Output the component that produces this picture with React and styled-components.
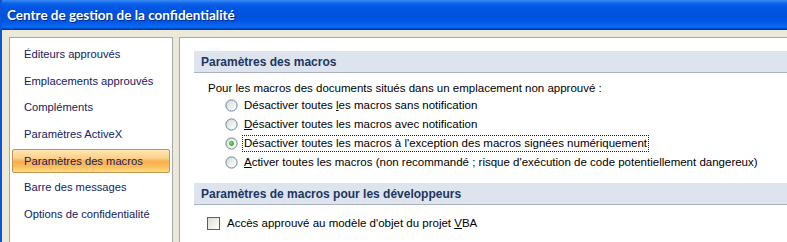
import React from 'react';
import styled, { createGlobalStyle } from 'styled-components';

const Global = createGlobalStyle`
  html, body { margin: 0; padding: 0; background: #ece9d8; }
  body { font-family: "Liberation Sans", Arial, sans-serif; }
`;

const navItems = [
    'Éditeurs approuvés',
    'Emplacements approuvés',
    'Compléments',
    'Paramètres ActiveX',
    'Paramètres des macros',
    'Barre des messages',
    'Options de confidentialité',
];

const Window = styled.div`
    width: 787px;
    height: 242px;
    overflow: hidden;
    border-left: 2px solid #0b53d9;
    box-sizing: border-box;
    display: flex;
    flex-direction: column;
    background: #ece9d8;
`;

const TitleBar = styled.div`
    height: 30px;
    flex: none;
    box-sizing: border-box;
    padding-left: 5px;
    display: flex;
    align-items: center;
    background: linear-gradient(to bottom,
        #3b8cf5 0px, #1f74f0 2px, #0a5fe8 4px, #0056e2 8px, #0052dc 16px,
        #0058e5 22px, #0a68f2 26px, #0562ea 28px, #0039a8 29px, #00339a 30px);
    color: #fff;
    font-family: "Lato", "Liberation Sans", sans-serif;
    font-weight: 700;
    font-size: 13.5px;
    text-shadow: 1px 1px 0 #0a2a8a;
    padding-bottom: 1px;
`;

const Body = styled.div`
    flex: 1;
    display: flex;
    gap: 6px;
    padding: 7px 0 0 7px;
    min-height: 0;
`;

const NavPane = styled.div`
    width: 164px;
    flex: none;
    box-sizing: border-box;
    background: #fff;
    border: 1px solid #a7a6aa;
    border-bottom: none;
    padding: 4px 2px 0;
    display: flex;
    flex-direction: column;
    gap: 2.7px;
`;

const NavItem = styled.div`
    height: 24px;
    box-sizing: border-box;
    display: flex;
    align-items: center;
    padding-left: 11px;
    font-size: 11.2px;
    color: #15205e;
    border-radius: 2px;
    border: 1px solid ${p => (p.$active ? '#c2964f' : 'transparent')};
    background: ${p => (p.$active
        ? 'linear-gradient(to bottom, #fde6b4 0%, #fdd088 38%, #fbb04c 52%, #fbbd5a 75%, #fddc86 100%)'
        : 'transparent')};
`;

const MainPane = styled.div`
    flex: 1;
    background: #fff;
    border: 1px solid #a7a6aa;
    border-right: none;
    border-bottom: none;
    padding: 13px 0 0 14px;
    display: flex;
    flex-direction: column;
`;

const SectionHeader = styled.div`
    height: 22px;
    box-sizing: border-box;
    background: #dde4ee;
    border-bottom: 1px solid #a9b3c1;
    padding-left: 7px;
    display: flex;
    align-items: center;
    font-size: 12px;
    font-weight: 700;
    color: #1e3560;
    margin-top: ${p => p.$gap || 0}px;
`;

const Intro = styled.div`
    margin: 7px 0 0 14px;
    height: 16px;
    line-height: 16px;
    font-size: 11.5px;
    color: #000;
`;

const RadioList = styled.div`
    display: flex;
    flex-direction: column;
`;

const Row = styled.div`
    height: 19px;
    display: flex;
    align-items: center;
    gap: ${p => p.$gap || 6}px;
    padding-left: ${p => p.$indent || 31}px;
    font-size: 11.5px;
    color: #000;
    margin-top: ${p => p.$top || 0}px;
`;

const Label = styled.span`
    padding: 0 1px;
    margin-left: -1px;
    line-height: 15px;
    outline: ${p => (p.$focus ? '1px dotted #222' : 'none')};
    outline-offset: 0;
    white-space: nowrap;
`;

const Key = styled.span`
    text-decoration: underline;
`;

const Box = styled.span`
    width: 13px;
    height: 13px;
    box-sizing: border-box;
    border: 1px solid #4d6185;
    background: linear-gradient(135deg, #dcdbd5 0%, #f2f1ec 60%, #ffffff 100%);
    flex: none;
`;

function Radio({ checked }) {
    return (
        <svg width="13" height="13" viewBox="0 0 13 13" style={{ flex: 'none' }}>
            <defs>
                <linearGradient id="rgrad" x1="0" y1="0" x2="1" y2="1">
                    <stop offset="0" stopColor="#d6d5cf" />
                    <stop offset="0.6" stopColor="#f3f3ef" />
                    <stop offset="1" stopColor="#ffffff" />
                </linearGradient>
                <radialGradient id="dot" cx="0.4" cy="0.4" r="0.6">
                    <stop offset="0" stopColor="#7fe27f" />
                    <stop offset="1" stopColor="#1f9a1f" />
                </radialGradient>
            </defs>
            <circle cx="6.5" cy="6.5" r="5.6" fill="url(#rgrad)" stroke="#6a83a4" strokeWidth="1" />
            {checked && <circle cx="6.5" cy="6.5" r="2.4" fill="url(#dot)" />}
        </svg>
    );
}

export default function App() {
    return (
        <Window>
            <Global />
            <TitleBar>Centre de gestion de la confidentialité</TitleBar>
            <Body>
                <NavPane>
                    {navItems.map((n, i) => (
                        <NavItem key={n} $active={i === 4}>{n}</NavItem>
                    ))}
                </NavPane>
                <MainPane>
                    <SectionHeader>Paramètres des macros</SectionHeader>
                    <Intro>Pour les macros des documents situés dans un emplacement non approuvé :</Intro>
                    <RadioList>
                        <Row>
                            <Radio />
                            <Label>Désactiver toutes <Key>l</Key>es macros sans notification</Label>
                        </Row>
                        <Row>
                            <Radio />
                            <Label><Key>D</Key>ésactiver toutes les macros avec notification</Label>
                        </Row>
                        <Row>
                            <Radio checked />
                            <Label $focus>Désactiver toutes les macros à l'exception des macros si<Key>g</Key>nées numériquement</Label>
                        </Row>
                        <Row>
                            <Radio />
                            <Label><Key>A</Key>ctiver toutes les macros (non recommandé ; risque d'exécution de code potentiellement dangereux)</Label>
                        </Row>
                    </RadioList>
                    <SectionHeader $gap={11}>Paramètres de macros pour les développeurs</SectionHeader>
                    <Row $indent={13} $gap={7} $top={9}>
                        <Box />
                        <Label>Accès approuvé au modèle d'objet du projet <Key>V</Key>BA</Label>
                    </Row>
                </MainPane>
            </Body>
        </Window>
    );
}
